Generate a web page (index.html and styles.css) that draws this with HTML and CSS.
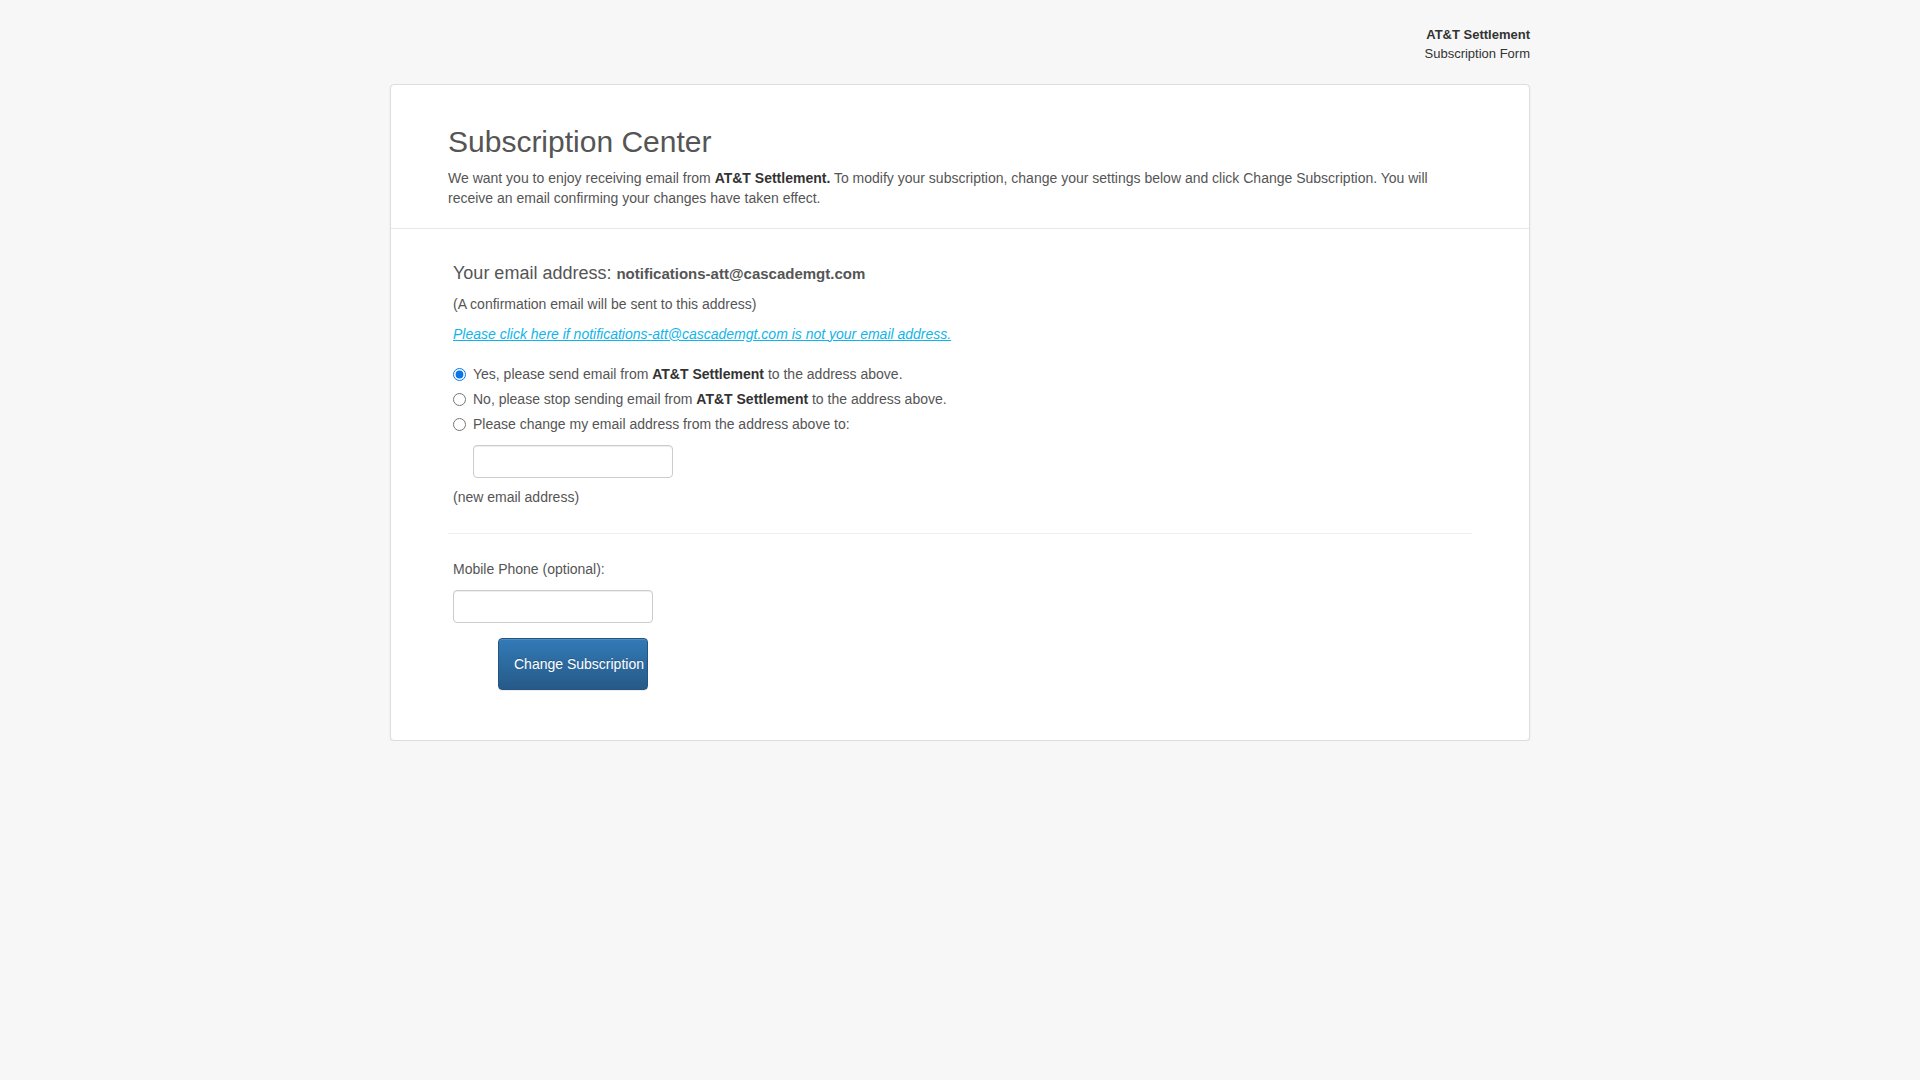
FILE: index.html
```html
<!DOCTYPE html>
<html lang="en">
<head>
<meta charset="utf-8">
<title>Subscription Center</title>
<link rel="stylesheet" href="styles.css">
</head>
<body>
<div class="container">
  <div class="brand">
    <strong>AT&amp;T Settlement</strong>
    <span>Subscription Form</span>
  </div>
  <div class="card">
    <div class="card-head">
      <h2>Subscription Center</h2>
      <p>We want you to enjoy receiving email from <b>AT&amp;T Settlement.</b> To modify your subscription, change your settings below and click Change Subscription. You will receive an email confirming your changes have taken effect.</p>
    </div>
    <div class="card-body">
      <div class="section">
        <h4>Your email address: <b>notifications-att@cascademgt.com</b></h4>
        <p>(A confirmation email will be sent to this address)</p>
        <p><a href="#" class="notme">Please click here if notifications-att@cascademgt.com is not your email address.</a></p>
        <div class="options">
          <label class="opt"><input type="radio" name="sub" checked>Yes, please send email from&nbsp;<b>AT&amp;T Settlement</b>&nbsp;to the address above.</label>
          <label class="opt"><input type="radio" name="sub">No, please stop sending email from&nbsp;<b>AT&amp;T Settlement</b>&nbsp;to the address above.</label>
          <label class="opt"><input type="radio" name="sub">Please change my email address from the address above to:</label>
        </div>
        <input type="text" class="field new-email">
        <p class="hint">(new email address)</p>
      </div>
      <hr class="sep">
      <div class="section phone">
        <label class="plabel">Mobile Phone (optional):</label>
        <input type="text" class="field">
        <button type="button" class="btn">Change Subscription</button>
      </div>
    </div>
  </div>
</div>
</body>
</html>
```
FILE: styles.css
```css
html, body {
  margin: 0;
  padding: 0;
}
body {
  background: #f7f7f7;
  font-family: "Liberation Sans", Arial, Helvetica, sans-serif;
  font-size: 14px;
  line-height: 1.42857;
  color: #555;
}
.container {
  width: 1140px;
  margin: 0 auto;
}
.brand {
  display: flex;
  flex-direction: column;
  align-items: flex-end;
  font-size: 13px;
  line-height: 19px;
  color: #333;
  padding-top: 25px;
  margin-bottom: 21px;
}
.brand strong {
  font-weight: bold;
}
.card {
  background: #fff;
  border: 1px solid #ddd;
  border-radius: 4px;
  box-shadow: 0 1px 2px rgba(0, 0, 0, 0.08);
}
.card-head {
  padding: 40px 57px 19px;
  border-bottom: 1px solid #e8e8e8;
}
.card-head h2 {
  margin: 0 0 11px;
  font-size: 30px;
  font-weight: normal;
  line-height: 1.1;
  color: #555;
}
.card-head p {
  margin: 0;
}
b {
  color: #333;
  font-weight: bold;
}
.card-body {
  padding: 35px 57px 50px;
}
.section {
  padding-left: 5px;
  display: flex;
  flex-direction: column;
  align-items: flex-start;
}
.section h4 {
  margin: 0 0 11px;
  font-size: 18px;
  font-weight: normal;
  line-height: 1.1;
  color: #555;
}
.section h4 b {
  font-size: 15px;
  color: #555;
}
.section p {
  margin: 0 0 10px;
}
.notme {
  color: #11b4ea;
  font-style: italic;
  text-decoration: underline;
}
.options {
  margin-top: 10px;
  display: flex;
  flex-direction: column;
  gap: 5px;
}
.opt {
  display: flex;
  align-items: center;
  white-space: nowrap;
}
.opt input {
  width: 13px;
  height: 13px;
  margin: 0 7px 0 0;
  accent-color: #0a75e8;
}
.field {
  box-sizing: border-box;
  width: 200px;
  height: 33px;
  border: 1px solid #ccc;
  border-radius: 4px;
  background: #fff;
  box-shadow: inset 0 1px 1px rgba(0, 0, 0, 0.075);
  padding: 6px 10px;
  font: inherit;
}
.new-email {
  margin: 10px 0 0 20px;
}
.section p.hint {
  margin: 10px 0 0;
}
.sep {
  border: 0;
  border-top: 1px solid #eee;
  margin: 25px 0 26px;
}
.plabel {
  margin-bottom: 10px;
}
.btn {
  margin: 15px 0 0 45px;
  box-sizing: border-box;
  width: 150px;
  height: 52px;
  padding: 0 0 0 15px;
  text-align: left;
  white-space: nowrap;
  font-family: "Liberation Sans", Arial, Helvetica, sans-serif;
  font-size: 14px;
  color: #fff;
  background: linear-gradient(to bottom, #337ab7 0%, #265a88 100%);
  border: 1px solid #245580;
  border-radius: 4px;
  text-shadow: 0 -1px 0 rgba(0, 0, 0, 0.2);
  box-shadow: inset 0 1px 0 rgba(255, 255, 255, 0.15), 0 1px 1px rgba(0, 0, 0, 0.075);
  cursor: pointer;
}
```
